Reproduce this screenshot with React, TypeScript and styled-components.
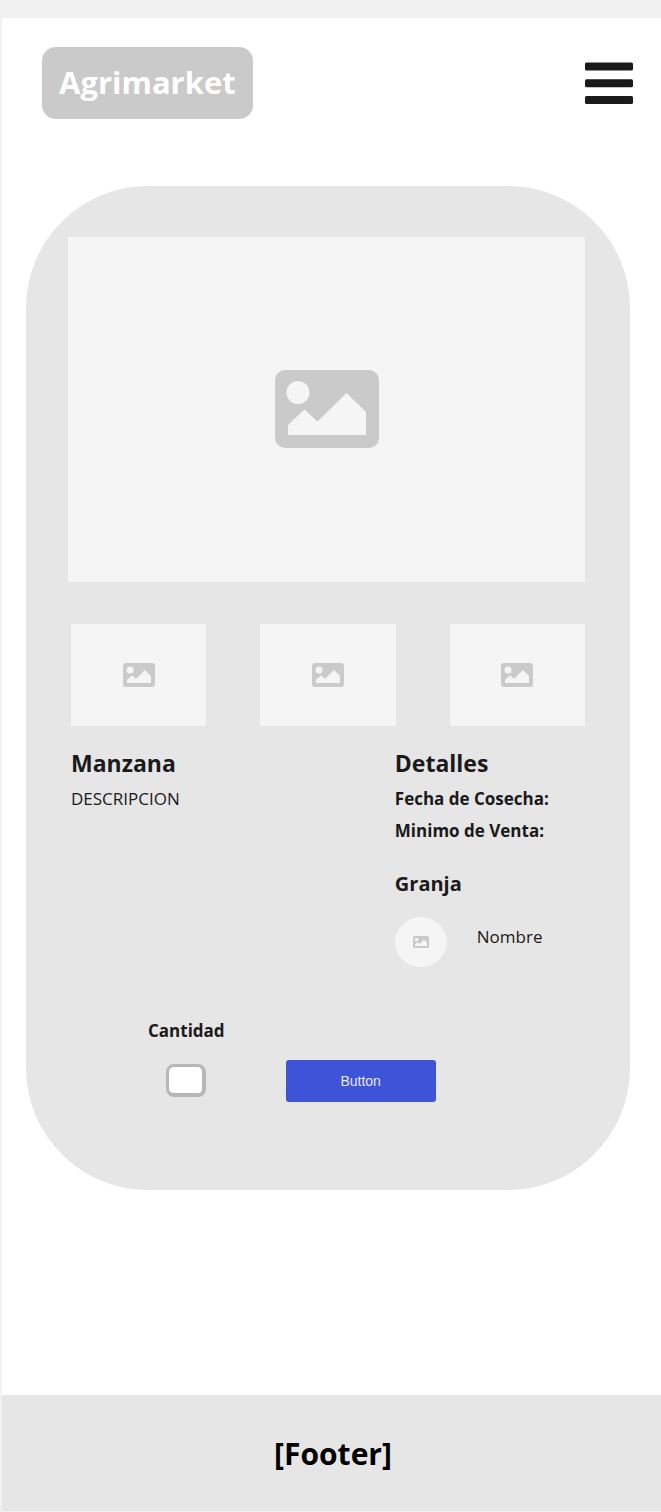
import React from "react";
import styled, { createGlobalStyle } from "styled-components";

const GlobalStyle = createGlobalStyle`
  *, *::before, *::after { box-sizing: border-box; }
  body {
    margin: 0;
    background: #ffffff;
    color: #1a1a1a;
    font-family: "Open Sans", sans-serif;
    font-size: 17px;
    line-height: 24px;
  }
  h1, h2, h3, p { margin: 0; }
`;

const Page = styled.div`
  display: flex;
  flex-direction: column;
  min-height: 100vh;
  border-top: 18px solid #f1f1f1;
  border-left: 2px solid #f1f1f1;
  border-bottom: 1px solid #f1f1f1;
`;

const Header = styled.header`
  display: flex;
  align-items: center;
  justify-content: space-between;
  padding: 29px 28px 0 40px;
`;

const Logo = styled.a`
  padding: 13px 17px 15px;
  border-radius: 14px;
  background: #cacaca;
  color: #ffffff;
  font-size: 31px;
  font-weight: 700;
  line-height: 44px;
  text-decoration: none;
`;

const MenuButton = styled.button`
  display: flex;
  padding: 0;
  border: 0;
  background: none;
  cursor: pointer;
`;

const Card = styled.main`
  display: flex;
  flex-direction: column;
  margin: 67px 31px 0 24px;
  padding: 51px 45px 88px;
  border-radius: 122px;
  background: #e6e6e6;
`;

const Picture = styled.div<{ $ratio: string }>`
  display: flex;
  align-items: center;
  justify-content: center;
  aspect-ratio: ${(p) => p.$ratio};
  background: #f5f5f5;
`;

const Hero = styled(Picture)`
  margin-left: -3px;
`;

const Thumbs = styled.div`
  display: grid;
  grid-template-columns: repeat(3, 1fr);
  gap: 54px;
  margin-top: 42px;
`;

const Info = styled.div`
  display: grid;
  grid-template-columns: 63fr 37fr;
  margin-top: 21px;
`;

const Column = styled.section`
  display: flex;
  flex-direction: column;
  gap: 8px;
`;

const Title = styled.h1`
  font-size: 23px;
  line-height: 32px;
`;

const Subtitle = styled.h3`
  margin-top: 19px;
  font-size: 20px;
  line-height: 28px;
`;

const Term = styled.p`
  font-weight: 700;
`;

const Farm = styled.div`
  display: flex;
  align-items: flex-start;
  gap: 30px;
  margin-top: 11px;
`;

const Avatar = styled.div`
  display: flex;
  align-items: center;
  justify-content: center;
  width: 52px;
  height: 50px;
  border-radius: 50%;
  background: #f5f5f5;
`;

const FarmName = styled.p`
  padding-top: 8px;
`;

const Order = styled.form`
  display: flex;
  align-items: flex-end;
  gap: 61px;
  margin: 52px 0 0 77px;
`;

const Field = styled.div`
  display: flex;
  flex-direction: column;
  align-items: center;
  gap: 21px;
  padding-bottom: 5px;
`;

const Label = styled.label`
  font-weight: 700;
`;

const Quantity = styled.input`
  width: 40px;
  height: 33px;
  padding: 0 4px;
  border: solid #b7b7b7;
  border-width: 3px 4px 4px 3px;
  border-radius: 8px;
  background: #ffffff;
  font: inherit;
  text-align: center;
`;

const Submit = styled.button`
  width: 150px;
  height: 42px;
  border: 0;
  border-radius: 3px;
  background: #3f53d9;
  color: #e6e9fa;
  font-family: "Liberation Sans", Arial, sans-serif;
  font-size: 14px;
  cursor: pointer;
`;

const Footer = styled.footer`
  display: flex;
  align-items: center;
  justify-content: center;
  margin-top: auto;
  padding: 39px 0 37px 3px;
  background: #e6e6e6;
  color: #000000;
  font-size: 30px;
  font-weight: 700;
  line-height: 40px;
`;

function ImageIcon({ width }: { width: number }) {
  return (
    <svg width={width} height={Math.round(width * 0.75)} viewBox="0 0 104 78" aria-hidden="true">
      <path
        fill="#cacaca"
        fillRule="evenodd"
        d="M10 0H94A10 10 0 0 1 104 10V68A10 10 0 0 1 94 78H10A10 10 0 0 1 0 68V10A10 10 0 0 1 10 0ZM23 11A11.5 11.5 0 1 0 23 34A11.5 11.5 0 1 0 23 11ZM13 55V65H91V42L71.5 23L42.500 51.500L29.500 39.500Z"
      />
    </svg>
  );
}

function MenuIcon() {
  return (
    <svg width="48" height="42" viewBox="0 0 48 42" fill="#1a1a1a" aria-hidden="true">
      <rect y="0.500" width="48" height="8" rx="1.500" />
      <rect y="17.300" width="48" height="8" rx="1.500" />
      <rect y="34" width="48" height="8" rx="1.500" />
    </svg>
  );
}

export default function App() {
  return (
    <>
      <GlobalStyle />
      <Page>
        <Header>
          <Logo href="#">Agrimarket</Logo>
          <MenuButton type="button" aria-label="Menú">
            <MenuIcon />
          </MenuButton>
        </Header>
        <Card>
          <Hero $ratio="3 / 2">
            <ImageIcon width={104} />
          </Hero>
          <Thumbs>
            {[1, 2, 3].map((n) => (
              <Picture key={n} $ratio="45 / 34">
                <ImageIcon width={32} />
              </Picture>
            ))}
          </Thumbs>
          <Info>
            <Column>
              <Title>Manzana</Title>
              <p>DESCRIPCION</p>
            </Column>
            <Column>
              <Title as="h2">Detalles</Title>
              <Term>Fecha de Cosecha:</Term>
              <Term>Minimo de Venta:</Term>
              <Subtitle>Granja</Subtitle>
              <Farm>
                <Avatar>
                  <ImageIcon width={16} />
                </Avatar>
                <FarmName>Nombre</FarmName>
              </Farm>
            </Column>
          </Info>
          <Order onSubmit={(e) => e.preventDefault()}>
            <Field>
              <Label htmlFor="cantidad">Cantidad</Label>
              <Quantity id="cantidad" type="text" inputMode="numeric" />
            </Field>
            <Submit type="submit">Button</Submit>
          </Order>
        </Card>
        <Footer>[Footer]</Footer>
      </Page>
    </>
  );
}
